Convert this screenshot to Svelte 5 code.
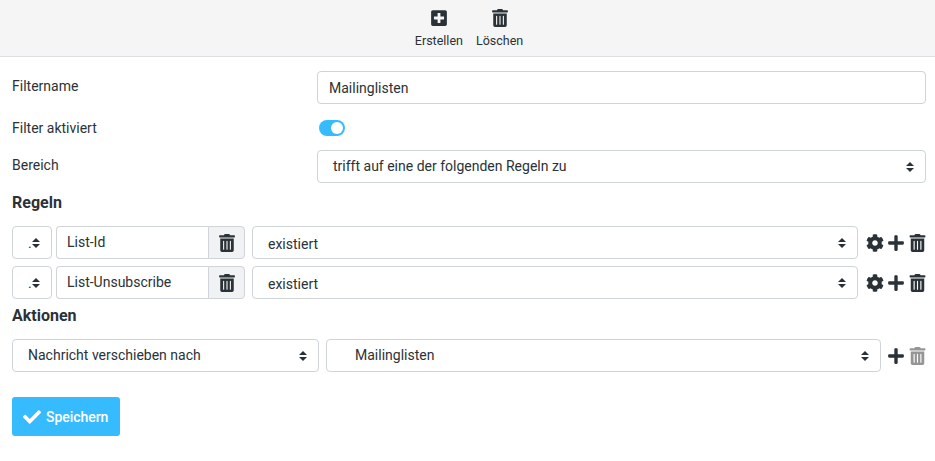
<script>
  const trash = "M32 464a48 48 0 0 0 48 48h288a48 48 0 0 0 48-48V128H32zm272-256a16 16 0 0 1 32 0v224a16 16 0 0 1-32 0zm-96 0a16 16 0 0 1 32 0v224a16 16 0 0 1-32 0zm-96 0a16 16 0 0 1 32 0v224a16 16 0 0 1-32 0zM432 32H312l-9.4-18.7A24 24 0 0 0 281.1 0H166.8a23.72 23.72 0 0 0-21.4 13.3L136 32H16A16 16 0 0 0 0 48v32a16 16 0 0 0 16 16h416a16 16 0 0 0 16-16V48a16 16 0 0 0-16-16z";
  const plus = "M416 208H272V64c0-17.67-14.33-32-32-32h-32c-17.67 0-32 14.33-32 32v144H32c-17.67 0-32 14.33-32 32v32c0 17.67 14.33 32 32 32h144v144c0 17.67 14.33 32 32 32h32c17.67 0 32-14.33 32-32V304h144c17.67 0 32-14.33 32-32v-32c0-17.67-14.33-32-32-32z";
  const plusSquare = "M400 32H48C21.5 32 0 53.5 0 80v352c0 26.5 21.5 48 48 48h352c26.5 0 48-21.5 48-48V80c0-26.5-21.5-48-48-48zm-32 252c0 6.6-5.4 12-12 12h-92v92c0 6.6-5.4 12-12 12h-56c-6.6 0-12-5.400-12-12v-92H92c-6.600 0-12-5.400-12-12v-56c0-6.600 5.400-12 12-12h92v-92c0-6.600 5.400-12 12-12h56c6.600 0 12 5.400 12 12v92h92c6.600 0 12 5.400 12 12v56z";
  const cog = "M487.4 315.7l-42.600-24.600c4.300-23.200 4.300-47 0-70.200l42.600-24.600c4.900-2.800 7.100-8.600 5.500-14-11.100-35.600-30-67.800-54.700-94.600-3.800-4.100-10-5.100-14.800-2.300L380.800 110c-17.900-15.400-38.500-27.300-60.800-35.100V25.800c0-5.600-3.900-10.500-9.400-11.700-36.700-8.200-74.300-7.800-109.200 0-5.500 1.200-9.400 6.100-9.400 11.700V75c-22.200 7.900-42.800 19.800-60.800 35.100L88.700 85.500c-4.900-2.800-11-1.900-14.800 2.300-24.700 26.700-43.600 58.900-54.700 94.600-1.700 5.400.6 11.200 5.500 14L67.300 221c-4.300 23.200-4.300 47 0 70.200l-42.600 24.600c-4.900 2.800-7.100 8.600-5.500 14 11.100 35.600 30 67.800 54.700 94.600 3.800 4.100 10 5.100 14.800 2.300l42.600-24.600c17.900 15.400 38.500 27.300 60.800 35.100v49.200c0 5.600 3.900 10.500 9.400 11.700 36.700 8.200 74.300 7.800 109.200 0 5.500-1.200 9.400-6.100 9.400-11.700v-49.200c22.200-7.900 42.800-19.800 60.800-35.100l42.600 24.600c4.900 2.800 11 1.900 14.800-2.300 24.700-26.700 43.600-58.900 54.700-94.600 1.500-5.500-.7-11.300-5.600-14.100zM256 336c-44.100 0-80-35.900-80-80s35.900-80 80-80 80 35.900 80 80-35.900 80-80 80z";
  const check = "M173.898 439.404l-166.400-166.400c-9.997-9.997-9.997-26.206 0-36.204l36.203-36.204c9.997-9.998 26.207-9.998 36.204 0L192 312.690 432.095 72.596c9.997-9.997 26.207-9.997 36.204 0l36.203 36.204c9.997 9.997 9.997 26.206 0 36.204l-294.400 294.401c-9.998 9.997-26.207 9.997-36.204-.001z";
  const rules = ["List-Id", "List-Unsubscribe"];
</script>

{#snippet arrows()}
  <svg class="arrows" viewBox="0 0 4 5" aria-hidden="true"><path d="M2 0L0 2h4zm0 5L0 3h4z" /></svg>
{/snippet}

{#snippet icon(d, vb, cls)}
  <svg class={cls} viewBox={vb} aria-hidden="true"><path {d} /></svg>
{/snippet}

<header class="toolbar">
  <div class="tool">
    {@render icon(plusSquare, "0 0 448 512", "tool-icon")}
    <span>Erstellen</span>
  </div>
  <div class="tool">
    {@render icon(trash, "0 0 448 512", "tool-icon")}
    <span>Löschen</span>
  </div>
</header>

<main class="form">
  <div class="row first">
    <div class="label">Filtername</div>
    <input class="control" value="Mailinglisten" />
  </div>
  <div class="row toggle-row">
    <div class="label">Filter aktiviert</div>
    <div class="switch"><span class="knob"></span></div>
  </div>
  <div class="row third">
    <div class="label">Bereich</div>
    <div class="control select raised"><span>trifft auf eine der folgenden Regeln zu</span>{@render arrows()}</div>
  </div>

  <h2 class="rules-head">Regeln</h2>
  <div class="rules">
    {#each rules as rule}
      <div class="rule">
        <div class="control select mini"><span>.</span>{@render arrows()}</div>
        <div class="group">
          <input class="control group-input" value={rule} />
          <div class="addon">{@render icon(trash, "0 0 448 512", "addon-icon")}</div>
        </div>
        <div class="control select grow lowered"><span>existiert</span>{@render arrows()}</div>
        <div class="actions">
          {@render icon(cog, "0 0 512 512", "act cog")}
          {@render icon(plus, "0 0 448 512", "act plus")}
          {@render icon(trash, "0 0 448 512", "act bin")}
        </div>
      </div>
    {/each}
  </div>

  <h2 class="actions-head">Aktionen</h2>
  <div class="action-row">
    <div class="control select action-type raised"><span>Nachricht verschieben nach</span>{@render arrows()}</div>
    <div class="control select grow folder raised"><span>Mailinglisten</span>{@render arrows()}</div>
    <div class="actions short">
      {@render icon(plus, "0 0 448 512", "act plus")}
      {@render icon(trash, "0 0 448 512", "act bin off")}
    </div>
  </div>

  <button class="save">
    {@render icon(check, "0 0 512 512", "check")}
    <span>Speichern</span>
  </button>
</main>

<style>
  :global(body) {
    margin: 0;
    background: #fff;
    font-family: Roboto, "Liberation Sans", sans-serif;
    font-size: 14px;
    color: #2b3237;
  }
  .toolbar {
    height: 56px;
    box-sizing: content-box;
    background: #f5f5f5;
    border-bottom: 1px solid #dcdfe1;
    display: flex;
    justify-content: center;
    gap: 13px;
    padding-left: 3px;
  }
  .tool {
    display: flex;
    flex-direction: column;
    align-items: center;
    padding-top: 9px;
    font-size: 12.5px;
    line-height: 14px;
  }
  .tool-icon {
    width: 16px;
    height: 18px;
    fill: #2b3237;
    margin-bottom: 7px;
  }
  .form {
    padding: 14px 9px 0 12px;
  }
  .row {
    display: grid;
    grid-template-columns: 305px 1fr;
    align-items: center;
  }
  .label {
    line-height: 20px;
    margin-top: -3px;
  }
  .toggle-row .label {
    margin-top: 0;
  }
  .control {
    box-sizing: border-box;
    height: 33px;
    border: 1px solid #ced4da;
    border-radius: 4px;
    background: #fff;
    font: inherit;
    color: inherit;
    min-width: 0;
  }
  input.control {
    padding: 0 11px;
    width: 100%;
    outline: none;
  }
  .select {
    display: flex;
    align-items: center;
    justify-content: space-between;
    padding: 0 11px 0 15px;
    white-space: nowrap;
  }
  .raised span {
    margin-top: -2px;
  }
  .lowered span {
    margin-top: 2px;
  }
  .arrows {
    width: 8px;
    height: 10px;
    fill: #2b3237;
    flex: none;
  }
  .toggle-row {
    margin-top: 14px;
    height: 16px;
  }
  .switch {
    width: 26px;
    height: 16px;
    margin-left: 2px;
    border-radius: 8px;
    background: #37bbff;
    display: flex;
    justify-content: flex-end;
    align-items: center;
    padding-right: 2px;
    box-sizing: border-box;
  }
  .knob {
    width: 12px;
    height: 12px;
    border-radius: 50%;
    background: #fff;
  }
  .third {
    margin-top: 16px;
  }
  h2 {
    margin: 0;
    font-size: 16px;
    font-weight: 700;
    line-height: 20px;
  }
  .rules-head {
    margin-top: 10px;
  }
  .rules {
    margin-top: 13px;
    display: flex;
    flex-direction: column;
    gap: 7px;
  }
  .rule, .action-row {
    display: flex;
    align-items: center;
  }
  .mini {
    width: 40px;
    flex: none;
    padding-left: 15px;
  }
  .group {
    display: flex;
    width: 189px;
    flex: none;
    margin-left: 4px;
  }
  input.group-input {
    flex: 1;
    border-radius: 4px 0 0 4px;
    border-right: 0;
    padding: 0 0 2px 10px;
  }
  .addon {
    width: 37px;
    height: 33px;
    box-sizing: border-box;
    flex: none;
    background: #f0f2f4;
    border: 1px solid #ced4da;
    border-radius: 0 4px 4px 0;
    display: flex;
    align-items: center;
    justify-content: center;
  }
  .addon-icon {
    width: 16px;
    height: 18px;
    fill: #2b3237;
  }
  .grow {
    flex: 1;
    margin-left: 7px;
  }
  .actions {
    display: flex;
    align-items: center;
    flex: none;
    margin-left: 8px;
  }
  .act {
    fill: #2b3237;
    flex: none;
  }
  .cog {
    width: 18px;
    height: 18px;
    margin-right: 4px;
  }
  .plus {
    width: 16px;
    height: 18px;
    margin-right: 5px;
  }
  .bin {
    width: 17px;
    height: 18px;
  }
  .off {
    fill: #959595;
  }
  .actions-head {
    margin-top: 7px;
  }
  .action-row {
    margin-top: 13px;
  }
  .action-type {
    width: 307px;
    flex: none;
  }
  .folder {
    padding-left: 28px;
  }
  .short {
    margin-left: 7px;
  }
  .save {
    margin-top: 25px;
    width: 108px;
    height: 39px;
    display: flex;
    align-items: center;
    gap: 5px;
    padding: 0 0 0 11px;
    border: 0;
    border-radius: 3px;
    background: #37bbff;
    color: #fff;
    font: inherit;
    font-weight: 500;
    letter-spacing: -0.05px;
  }
  .check {
    width: 18px;
    height: 18px;
    fill: #fff;
  }
</style>
